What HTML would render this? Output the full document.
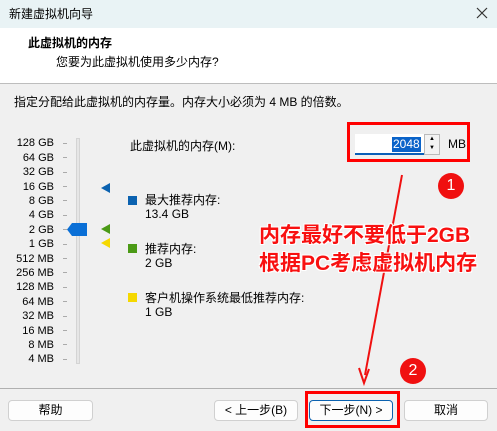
<!DOCTYPE html>
<html><head><meta charset="utf-8"><style>
*{margin:0;padding:0;box-sizing:border-box}
body{width:497px;height:431px;overflow:hidden;background:#f0f0f0;font-family:"Liberation Sans","Noto Sans CJK SC",sans-serif;font-size:12px;color:#000;position:relative}
.a{position:absolute;white-space:nowrap}
.lbl{position:absolute;right:443px;font-size:11px;line-height:12px}
.tick{position:absolute;left:63px;width:4px;height:1px;background:#aaa}
.btn{position:absolute;top:400px;height:21px;background:#fdfdfd;border:1px solid #d0d0d0;border-radius:4px;text-align:center;line-height:19px;font-size:12px}
.sq{position:absolute;left:128px;width:9px;height:9px}
.tri{position:absolute;left:101px;width:0;height:0;border-top:5px solid transparent;border-bottom:5px solid transparent;border-right:9px solid}
.red{position:absolute;font-weight:bold;font-size:21px;color:#f81010;text-shadow:-1px -1px 0 #fff,1px -1px 0 #fff,-1px 1px 0 #fff,1px 1px 0 #fff,0 0 2px #fff;white-space:nowrap}
.circ{position:absolute;width:26px;height:26px;border-radius:50%;background:#f01010;color:#fff;text-align:center;line-height:26px;font-size:16px}
</style></head><body>
<div class="a" style="left:0;top:0;width:497px;height:28px;background:#e9f3f5"></div>
<div class="a" style="left:9px;top:5px;font-size:12px">新建虚拟机向导</div>
<svg class="a" style="left:476px;top:7px" width="12" height="12"><path d="M1 1L11 11M11 1L1 11" stroke="#333" stroke-width="1.2"/></svg>
<div class="a" style="left:0;top:28px;width:497px;height:56px;background:#fff;border-bottom:1px solid #bdbdbd"></div>
<div class="a" style="left:28px;top:34px;font-weight:bold;font-size:12px">此虚拟机的内存</div>
<div class="a" style="left:56px;top:53px">您要为此虚拟机使用多少内存?</div>
<div class="a" style="left:14px;top:93px">指定分配给此虚拟机的内存量。内存大小必须为 4 MB 的倍数。</div>

<div class="lbl" style="top:137px">128 GB</div><div class="lbl" style="top:152px">64 GB</div>
<div class="lbl" style="top:166px">32 GB</div><div class="lbl" style="top:181px">16 GB</div>
<div class="lbl" style="top:195px">8 GB</div><div class="lbl" style="top:209px">4 GB</div>
<div class="lbl" style="top:224px">2 GB</div><div class="lbl" style="top:238px">1 GB</div>
<div class="lbl" style="top:253px">512 MB</div><div class="lbl" style="top:267px">256 MB</div>
<div class="lbl" style="top:281px">128 MB</div><div class="lbl" style="top:296px">64 MB</div>
<div class="lbl" style="top:310px">32 MB</div><div class="lbl" style="top:325px">16 MB</div>
<div class="lbl" style="top:339px">8 MB</div><div class="lbl" style="top:353px">4 MB</div>
<div class="tick" style="top:143px"></div><div class="tick" style="top:157px"></div><div class="tick" style="top:172px"></div><div class="tick" style="top:186px"></div><div class="tick" style="top:200px"></div><div class="tick" style="top:215px"></div><div class="tick" style="top:229px"></div><div class="tick" style="top:244px"></div><div class="tick" style="top:258px"></div><div class="tick" style="top:272px"></div><div class="tick" style="top:287px"></div><div class="tick" style="top:301px"></div><div class="tick" style="top:316px"></div><div class="tick" style="top:330px"></div><div class="tick" style="top:344px"></div><div class="tick" style="top:359px"></div>
<div class="a" style="left:76px;top:138px;width:4px;height:226px;background:#e6e6e6;border:1px solid #d4d4d4"></div>
<svg class="a" style="left:67px;top:223px" width="21" height="13"><path d="M0 6.5 L5 0 H20 V13 H5 Z" fill="#0a6fd6"/></svg>
<div class="tri" style="top:183px;border-right-color:#0b62b0"></div>
<div class="tri" style="top:224px;border-right-color:#4b9a16"></div>
<div class="tri" style="top:238px;border-right-color:#f5d800"></div>

<div class="a" style="left:130px;top:137px">此虚拟机的内存(M):</div>
<div class="a" style="left:355px;top:134px;width:69px;height:21px;background:#fff;border-bottom:2px solid #0b5fb8"></div>
<div class="a" style="left:392px;top:137px;background:#0a63c9;color:#fff;padding:0 1px;line-height:15px">2048</div>
<div class="a" style="left:424px;top:134px;width:16px;height:21px;border:1px solid #bbb;background:#f3f3f3;font-size:6px;line-height:9px;text-align:center">▲<br>▼</div>
<div class="a" style="left:448px;top:137px">MB</div>
<div class="a" style="left:347px;top:122px;width:123px;height:40px;border:3px solid #f00"></div>

<div class="sq" style="top:196px;background:#0b62b0"></div>
<div class="a" style="left:145px;top:191px">最大推荐内存:</div>
<div class="a" style="left:145px;top:207px">13.4 GB</div>
<div class="sq" style="top:244px;background:#4b9a16"></div>
<div class="a" style="left:145px;top:240px">推荐内存:</div>
<div class="a" style="left:145px;top:256px">2 GB</div>
<div class="sq" style="top:293px;background:#f5d800"></div>
<div class="a" style="left:145px;top:289px">客户机操作系统最低推荐内存:</div>
<div class="a" style="left:145px;top:305px">1 GB</div>

<svg class="a" style="left:0;top:0" width="497" height="431"><line x1="402" y1="175" x2="365" y2="375" stroke="#f01010" stroke-width="2"/><path d="M359 368 L364 383 L369 369" fill="none" stroke="#f01010" stroke-width="2"/></svg>
<div class="red" style="left:259px;top:219px">内存最好不要低于2GB</div>
<div class="red" style="left:259px;top:247px">根据PC考虑虚拟机内存</div>
<div class="circ" style="left:438px;top:173px">1</div>
<div class="circ" style="left:400px;top:358px">2</div>

<div class="a" style="left:0;top:388px;width:497px;height:1px;background:#b0b0b0"></div>
<div class="btn" style="left:8px;width:85px">帮助</div>
<div class="btn" style="left:214px;width:84px">&lt; 上一步(B)</div>
<div class="btn" style="left:309px;width:84px;border-color:#0b62b0">下一步(N) &gt;</div>
<div class="btn" style="left:404px;width:84px">取消</div>
<div class="a" style="left:305px;top:391px;width:95px;height:37px;border:3px solid #f00"></div>
</body></html>
